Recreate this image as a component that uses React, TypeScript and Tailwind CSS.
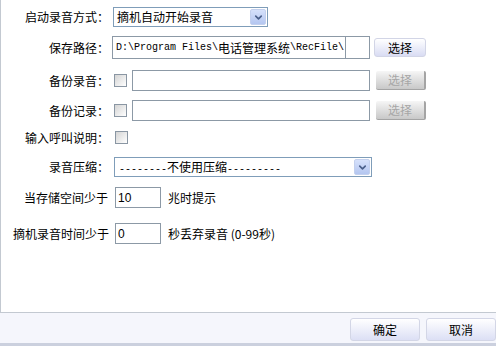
import { ChevronDown } from 'lucide-react'

// ── Pecas pequenas reaproveitadas ────────────────────────
const cjk = '[font-family:"Noto_Sans_CJK_SC","Liberation_Sans",sans-serif]'

function Label({ text, w = 'w-[108px]' }: { text: string; w?: string }) {
  return <div className={`${w} shrink-0 text-right leading-none`}>{text}</div>
}

function Checkbox() {
  return (
    <div className="w-[13px] h-[13px] shrink-0 border border-[#8a96a3] bg-gradient-to-br from-[#d4d4d4] to-white" />
  )
}

function Arrow() {
  return (
    <div className="w-[16px] h-[16px] flex items-center justify-center bg-gradient-to-b from-[#d6e1fb] to-[#b4c6f0] border border-[#c3d0ee] rounded-[2px]">
      <ChevronDown size={11} strokeWidth={3.5} className="text-[#4a5f8a]" />
    </div>
  )
}

function PickButton({ disabled = false }: { disabled?: boolean }) {
  return disabled ? (
    <div className="ml-[6px] w-[50px] h-[19px] flex items-center justify-center rounded-[2px] border-r-2 border-b border-[#a4a4a4] bg-gradient-to-b from-[#f6f6f6] to-[#c8c8c8] text-[#a6a6a6]">
      选择
    </div>
  ) : (
    <div className="ml-[4px] w-[52px] h-[19px] flex items-center justify-center rounded-[3px] border border-[#d2d5e6] bg-gradient-to-b from-white to-[#d9dcf3]">
      选择
    </div>
  )
}

function FooterButton({ text }: { text: string }) {
  return (
    <div className="w-[70px] h-[23px] flex items-center justify-center rounded-[3px] border border-[#d3d6e6] bg-gradient-to-b from-white to-[#dcdff5]">
      {text}
    </div>
  )
}

export default function App() {
  return (
    <div className={`w-[496px] h-[346px] bg-white flex flex-col text-[12px] text-black ${cjk}`}>
      {/* area do formulario */}
      <div className="h-[313px] border-l border-b border-[#c3c9d1] flex flex-col">
        {/* 启动录音方式 */}
        <div className="mt-[7px] h-[20px] flex items-center">
          <Label text="启动录音方式：" />
          <div className="ml-[4px] w-[155px] h-[20px] border border-[#7f9db9] flex items-center justify-between pl-[3px] pr-[1px]">
            <span>摘机自动开始录音</span>
            <Arrow />
          </div>
        </div>

        {/* 保存路径 */}
        <div className="mt-[9px] h-[23px] flex items-center">
          <Label text="保存路径：" />
          <div className="ml-[3px] w-[258px] h-[23px] border border-[#8c99a6] flex items-center pl-[3px] whitespace-nowrap overflow-hidden">
            <span className="[font-family:'Liberation_Mono',monospace] text-[10px]">D:\Program Files\</span>
            <span>电话管理系统</span>
            <span className="[font-family:'Liberation_Mono',monospace] text-[10px]">\RecFile\</span>
            <span className="ml-[1px] w-px h-[21px] bg-[#8c99a6]" />
          </div>
          <PickButton />
        </div>

        {/* 备份录音 */}
        <div className="mt-[11px] h-[21px] flex items-center">
          <Label text="备份录音：" />
          <div className="ml-[5px]"><Checkbox /></div>
          <div className="ml-[5px] w-[238px] h-[21px] border border-[#8c99a6]" />
          <PickButton disabled />
        </div>

        {/* 备份记录 */}
        <div className="mt-[9px] h-[21px] flex items-center">
          <Label text="备份记录：" />
          <div className="ml-[5px]"><Checkbox /></div>
          <div className="ml-[5px] w-[238px] h-[21px] border border-[#8c99a6]" />
          <PickButton disabled />
        </div>

        {/* 输入呼叫说明 */}
        <div className="mt-[10px] h-[13px] flex items-center">
          <Label text="输入呼叫说明：" />
          <div className="ml-[6px]"><Checkbox /></div>
        </div>

        {/* 录音压缩 */}
        <div className="mt-[13px] h-[20px] flex items-center">
          <Label text="录音压缩：" />
          <div className="ml-[5px] w-[258px] h-[20px] border border-[#7f9db9] flex items-center justify-between pl-[4px] pr-[1px]">
            <span className="whitespace-nowrap">
              <span className="[font-family:'Liberation_Mono',monospace] text-[10px]">--------</span>
              不使用压缩
              <span className="[font-family:'Liberation_Mono',monospace] text-[10px]">---------</span>
            </span>
            <Arrow />
          </div>
        </div>

        {/* 当存储空间少于 */}
        <div className="mt-[10px] h-[21px] flex items-center">
          <Label text="当存储空间少于" w="w-[107px]" />
          <div className="ml-[7px] w-[46px] h-[21px] border border-[#8c99a6] flex items-center pl-[2px] [font-family:'Liberation_Sans',sans-serif]">
            10
          </div>
          <span className="ml-[7px]">兆时提示</span>
        </div>

        {/* 摘机录音时间少于 */}
        <div className="mt-[15px] h-[21px] flex items-center">
          <Label text="摘机录音时间少于" />
          <div className="ml-[6px] w-[46px] h-[21px] border border-[#8c99a6] flex items-center pl-[2px] [font-family:'Liberation_Sans',sans-serif]">
            0
          </div>
          <span className="ml-[7px]">秒丢弃录音 (0-99秒)</span>
        </div>
      </div>

      {/* barra inferior com os botoes */}
      <div className="h-[30px] bg-[#f5f6fc] flex justify-end items-start pt-[5px] gap-[6px]">
        <FooterButton text="确定" />
        <FooterButton text="取消" />
      </div>
      <div className="h-[3px] bg-[#cbd0de]" />
    </div>
  )
}
